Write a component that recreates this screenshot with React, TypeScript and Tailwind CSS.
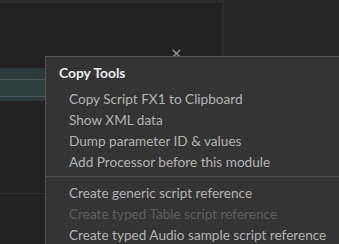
import { X } from "lucide-react";

const items: { label: string; disabled?: boolean }[][] = [
  [
    { label: "Copy Script FX1 to Clipboard" },
    { label: "Show XML data" },
    { label: "Dump parameter ID & values" },
    { label: "Add Processor before this module" },
  ],
  [
    { label: "Create generic script reference" },
    { label: "Create typed Table script reference", disabled: true },
    { label: "Create typed Audio sample script reference" },
  ],
];

export default function App() {
  return (
    <div
      className="relative h-[244px] w-[339px] overflow-hidden bg-[#222222]"
      style={{ fontFamily: "Lato, 'Open Sans', sans-serif" }}
    >
      <div className="flex h-full">
        {/* left editor panel */}
        <div className="flex w-[222px] flex-col">
          <div className="h-[3px] bg-[#2c2c2c]" />
          <div className="h-[65px] bg-[#212121]" />
          <div className="h-[11px] bg-[#2d3b3b]" />
          <div className="h-px bg-[#4a5656]" />
          <div className="h-[16px] bg-[#2f3e3e]" />
          <div className="h-px bg-[#4a5656]" />
          <div className="h-[4px] bg-[#2d3b3b]" />
          <div className="h-[92px] bg-[#232323]" />
          <div className="h-px bg-[#303030]" />
          <div className="flex-1 bg-[#232323]" />
        </div>
        <div className="w-[2px] bg-[#2e2e2e]" />
        <div className="flex-1 bg-[#262626]" />
      </div>

      <X
        className="absolute left-[170px] top-[47px] text-[#8a8a8a]"
        size={13}
        strokeWidth={3.2}
      />

      {/* context menu */}
      <div className="absolute left-[45px] top-[56px] h-[200px] w-[310px] border border-[#555555] bg-[#343434] shadow-lg">
        <div className="flex h-[32px] items-center pl-[13px] pt-[1px] text-[13.8px] font-bold text-[#ededed]">
          Copy Tools
        </div>
        {items.map((group, gi) => (
          <div key={gi}>
            {gi > 0 && <div className="mb-[6px] mt-[3px] h-px bg-[#4c4c4c]" />}
            {group.map((it) => (
              <div
                key={it.label}
                className={
                  "flex h-[21px] items-center whitespace-nowrap pl-[23px] text-[13.6px] " +
                  (it.disabled ? "text-[#5f5f5f]" : "text-[#b3b3b3]")
                }
              >
                {it.label}
              </div>
            ))}
          </div>
        ))}
      </div>
    </div>
  );
}
